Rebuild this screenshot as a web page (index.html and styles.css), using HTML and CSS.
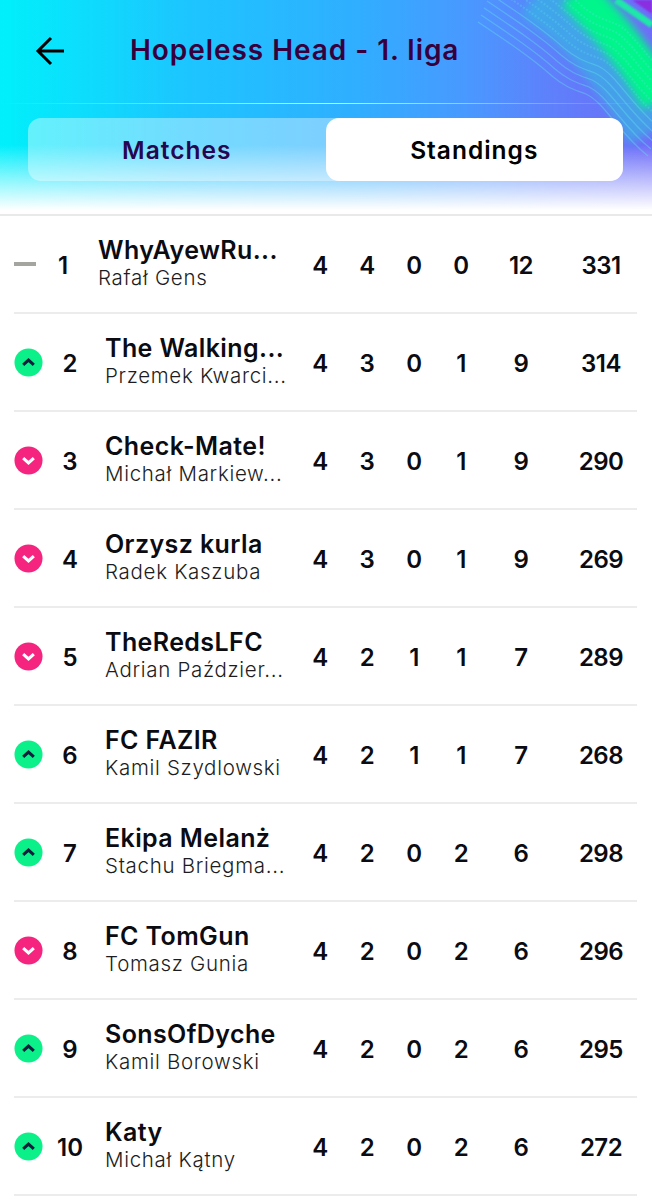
FILE: index.html
```html
<!DOCTYPE html>
<html lang="pl">
<head>
<meta charset="utf-8">
<title>Hopeless Head - 1. liga</title>
<link rel="stylesheet" href="styles.css">
</head>
<body>
<header class="hero">
  <svg class="swirl" viewBox="0 0 182 190" aria-hidden="true">
    <defs>
      <filter id="soft" x="-30%" y="-30%" width="160%" height="160%"><feGaussianBlur stdDeviation="5"/></filter>
      <filter id="softer" x="-30%" y="-30%" width="160%" height="160%"><feGaussianBlur stdDeviation="1"/></filter>
      <path id="wave" d="M20 -6C50 14 74 30 94 48C108 60 118 62 128 66C146 74 160 104 190 128"/>
    </defs>
    <path class="teal" d="M70 -10C110 20 150 60 186 130" filter="url(#soft)"/>
    <path class="green" d="M106 -8C130 18 160 46 190 100" filter="url(#soft)"/>
    <path class="corner" d="M162 0H182V14Z" filter="url(#softer)"/>
    <path class="stripe" d="M146 0L182 25" filter="url(#softer)"/>
    <g class="waves">
      <use href="#wave"/>
      <use href="#wave" transform="translate(-3 7)"/>
      <use href="#wave" transform="translate(-6 14)"/>
      <use href="#wave" transform="translate(-9 21)"/>
      <use href="#wave" transform="translate(-12 28)"/>
    </g>
    <g class="waves waves-dotted">
      <use href="#wave" transform="translate(3 -7)"/>
      <use href="#wave" transform="translate(6 -14)"/>
      <use href="#wave" transform="translate(9 -21)"/>
      <use href="#wave" transform="translate(12 -28)"/>
      <use href="#wave" transform="translate(15 -35)"/>
      <use href="#wave" transform="translate(18 -42)"/>
    </g>
  </svg>
  <div class="topbar">
    <svg class="back" viewBox="0 0 32 32" aria-hidden="true"><path d="M30 17H5M17 4L4 17L17 30" fill="none" stroke="#000" stroke-width="3"/></svg>
    <h1 class="title">Hopeless Head - 1. liga</h1>
  </div>
  <div class="rule"></div>
  <div class="tabs">
    <div class="tab">Matches</div>
    <div class="tab tab-active">Standings</div>
  </div>
</header>
<main class="table">
  <div class="row">
    <span class="dash"></span><span class="rank">1</span>
    <div class="team"><div class="name">WhyAyewRu...</div><div class="owner">Rafał Gens</div></div>
    <span class="n c1">4</span><span class="n c2">4</span><span class="n c3">0</span><span class="n c4">0</span><span class="n c5">12</span><span class="n c6">331</span>
  </div>
  <div class="row">
    <svg class="badge" viewBox="0 0 30 30" aria-hidden="true"><circle class="up" cx="15" cy="15" r="14.5"/><path class="chev-up" d="M9.5 17.5L15 12.5L20.500 17.500"/></svg><span class="rank">2</span>
    <div class="team"><div class="name">The Walking...</div><div class="owner">Przemek Kwarci...</div></div>
    <span class="n c1">4</span><span class="n c2">3</span><span class="n c3">0</span><span class="n c4">1</span><span class="n c5">9</span><span class="n c6">314</span>
  </div>
  <div class="row">
    <svg class="badge" viewBox="0 0 30 30" aria-hidden="true"><circle class="down" cx="15" cy="15" r="14.5"/><path class="chev-down" d="M9.5 12.5L15 17.5L20.500 12.500"/></svg><span class="rank">3</span>
    <div class="team"><div class="name">Check-Mate!</div><div class="owner">Michał Markiew...</div></div>
    <span class="n c1">4</span><span class="n c2">3</span><span class="n c3">0</span><span class="n c4">1</span><span class="n c5">9</span><span class="n c6">290</span>
  </div>
  <div class="row">
    <svg class="badge" viewBox="0 0 30 30" aria-hidden="true"><circle class="down" cx="15" cy="15" r="14.5"/><path class="chev-down" d="M9.5 12.5L15 17.5L20.500 12.500"/></svg><span class="rank">4</span>
    <div class="team"><div class="name">Orzysz kurla</div><div class="owner">Radek Kaszuba</div></div>
    <span class="n c1">4</span><span class="n c2">3</span><span class="n c3">0</span><span class="n c4">1</span><span class="n c5">9</span><span class="n c6">269</span>
  </div>
  <div class="row">
    <svg class="badge" viewBox="0 0 30 30" aria-hidden="true"><circle class="down" cx="15" cy="15" r="14.5"/><path class="chev-down" d="M9.5 12.5L15 17.5L20.500 12.500"/></svg><span class="rank">5</span>
    <div class="team"><div class="name">TheRedsLFC</div><div class="owner">Adrian Paździer...</div></div>
    <span class="n c1">4</span><span class="n c2">2</span><span class="n c3">1</span><span class="n c4">1</span><span class="n c5">7</span><span class="n c6">289</span>
  </div>
  <div class="row">
    <svg class="badge" viewBox="0 0 30 30" aria-hidden="true"><circle class="up" cx="15" cy="15" r="14.5"/><path class="chev-up" d="M9.5 17.5L15 12.5L20.500 17.500"/></svg><span class="rank">6</span>
    <div class="team"><div class="name">FC FAZIR</div><div class="owner">Kamil Szydlowski</div></div>
    <span class="n c1">4</span><span class="n c2">2</span><span class="n c3">1</span><span class="n c4">1</span><span class="n c5">7</span><span class="n c6">268</span>
  </div>
  <div class="row">
    <svg class="badge" viewBox="0 0 30 30" aria-hidden="true"><circle class="up" cx="15" cy="15" r="14.5"/><path class="chev-up" d="M9.5 17.5L15 12.5L20.500 17.500"/></svg><span class="rank">7</span>
    <div class="team"><div class="name">Ekipa Melanż</div><div class="owner">Stachu Briegma...</div></div>
    <span class="n c1">4</span><span class="n c2">2</span><span class="n c3">0</span><span class="n c4">2</span><span class="n c5">6</span><span class="n c6">298</span>
  </div>
  <div class="row">
    <svg class="badge" viewBox="0 0 30 30" aria-hidden="true"><circle class="down" cx="15" cy="15" r="14.5"/><path class="chev-down" d="M9.5 12.5L15 17.5L20.500 12.500"/></svg><span class="rank">8</span>
    <div class="team"><div class="name">FC TomGun</div><div class="owner">Tomasz Gunia</div></div>
    <span class="n c1">4</span><span class="n c2">2</span><span class="n c3">0</span><span class="n c4">2</span><span class="n c5">6</span><span class="n c6">296</span>
  </div>
  <div class="row">
    <svg class="badge" viewBox="0 0 30 30" aria-hidden="true"><circle class="up" cx="15" cy="15" r="14.5"/><path class="chev-up" d="M9.5 17.5L15 12.5L20.500 17.500"/></svg><span class="rank">9</span>
    <div class="team"><div class="name">SonsOfDyche</div><div class="owner">Kamil Borowski</div></div>
    <span class="n c1">4</span><span class="n c2">2</span><span class="n c3">0</span><span class="n c4">2</span><span class="n c5">6</span><span class="n c6">295</span>
  </div>
  <div class="row">
    <svg class="badge" viewBox="0 0 30 30" aria-hidden="true"><circle class="up" cx="15" cy="15" r="14.5"/><path class="chev-up" d="M9.5 17.5L15 12.5L20.500 17.500"/></svg><span class="rank">10</span>
    <div class="team"><div class="name">Katy</div><div class="owner">Michał Kątny</div></div>
    <span class="n c1">4</span><span class="n c2">2</span><span class="n c3">0</span><span class="n c4">2</span><span class="n c5">6</span><span class="n c6">272</span>
  </div>
</main>
</body>
</html>
```
FILE: styles.css
```css
* { box-sizing: border-box; }
html, body { margin: 0; padding: 0; background: #fff; }
body { width: 652px; height: 1200px; overflow: hidden; font-family: "Inter", "Liberation Sans", sans-serif; color: #0b0b12; }

.hero {
  position: relative;
  height: 216px;
  padding-top: 24px;
  border-bottom: 2px solid #e9e9e9;
  overflow: hidden;
  background:
    linear-gradient(180deg, rgba(255,255,255,0) 0, rgba(255,255,255,0) 145px, rgba(255,255,255,0.55) 180px, #fff 210px),
    linear-gradient(90deg, #00f0fb 0, #1cc6ff 28%, #30aeff 55%, #4a98ff 72%, #5f7ffb 85%, #6f6cf8 100%);
}
.swirl { position: absolute; right: 0; top: 0; width: 182px; height: 190px; }
.teal { fill: none; stroke: #25c4dc; stroke-width: 62; stroke-opacity: 0.55; }
.green { fill: none; stroke: #00f58a; stroke-width: 38; }
.corner { fill: #8a2de0; }
.stripe { fill: none; stroke: #1fe8a8; stroke-width: 7; }
.waves { fill: none; stroke: #62e0ea; stroke-opacity: 0.4; stroke-width: 1.3; }
.waves-dotted { stroke-dasharray: 2 1.6; stroke-opacity: 0.28; stroke-width: 2; }
.topbar { position: relative; display: flex; align-items: center; height: 52px; padding-left: 34px; }
.back { width: 32px; height: 32px; flex: none; }
.title { margin: 0 0 0 64px; font-size: 28px; line-height: 52px; font-weight: 600; letter-spacing: 0.95px; color: #37003c; white-space: nowrap; }
.rule {
  position: relative;
  height: 1px;
  margin-top: 27px;
  background: linear-gradient(90deg, rgba(255,255,255,0), rgba(255,255,255,0.75) 50%, rgba(255,255,255,0));
}
.tabs {
  position: relative;
  display: flex;
  margin: 14px 29px 0 28px;
  height: 63px;
  border-radius: 13px;
  background: rgba(255,255,255,0.38);
}
.tab { flex: 1; display: flex; align-items: center; justify-content: center; font-size: 24.5px; font-weight: 600; letter-spacing: 1px; color: #26064f; border-radius: 13px; }
.tab-active { background: #fff; color: #000; }

.table { padding: 0 15px 0 14px; }
.row {
  position: relative;
  display: flex;
  align-items: center;
  height: 98px;
  border-bottom: 2px solid #ececec;
}
.dash { flex: none; width: 22px; height: 4px; background: #a5a5a0; }
.badge { flex: none; width: 29px; height: 29px; }
.up { fill: #0cf08a; }
.down { fill: #f5257f; }
.chev-up, .chev-down { fill: none; stroke-width: 3.2; }
.chev-up { stroke: #10203c; }
.chev-down { stroke: #fff; }
.rank { flex: none; width: 54px; margin-right: 8px; text-align: center; font-size: 24px; font-weight: 600; margin-top: 2px; }
.team { flex: none; width: 190px; min-width: 0; margin-top: -1px; }
.name { font-size: 25px; line-height: 27px; font-weight: 600; letter-spacing: 0.4px; white-space: nowrap; }
.owner { font-size: 20.5px; line-height: 27px; font-weight: 300; letter-spacing: 0.7px; white-space: nowrap; color: #1c1c22; }
.n { position: absolute; top: 50%; margin-top: 1px; transform: translate(-50%, -50%); font-size: 24px; font-weight: 600; letter-spacing: -0.5px; }
.c1 { left: 306px; }
.c2 { left: 353px; }
.c3 { left: 400px; }
.c4 { left: 447px; }
.c5 { left: 507px; }
.c6 { left: 587px; }
```
